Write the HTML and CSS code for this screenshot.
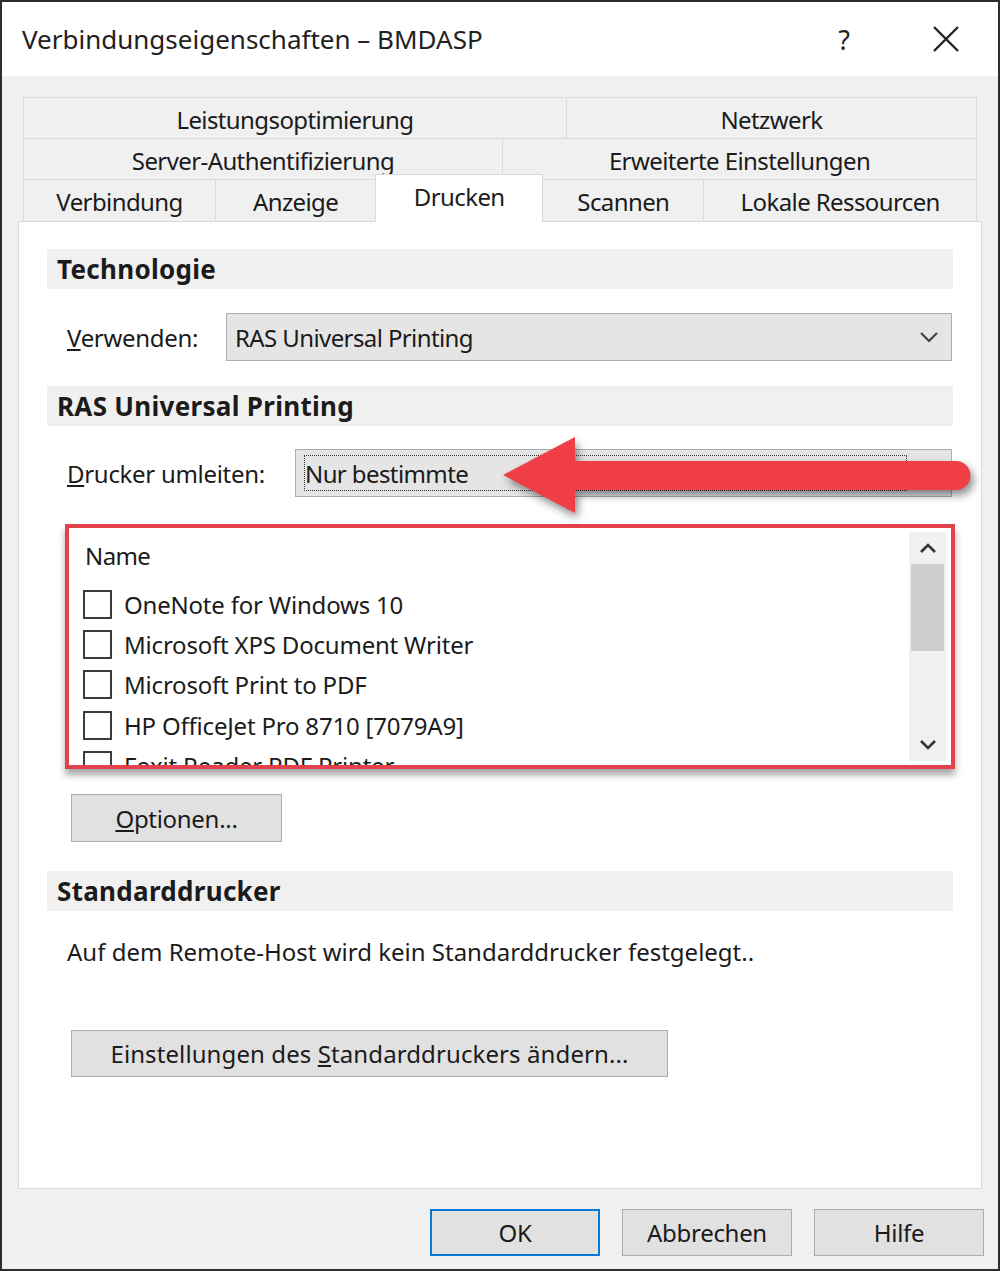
FILE: index.html
```html
<!DOCTYPE html>
<html lang="de">
  <head>
    <meta charset="UTF-8" />
    <meta name="viewport" content="width=device-width, initial-scale=1.0" />
    <title>Verbindungseigenschaften – BMDASP</title>
    <link rel="stylesheet" href="styles.css">
  </head>
  <body>
    <div class="dialog">
      <div class="titlebar">
        <span class="title">Verbindungseigenschaften – BMDASP</span>
        <span class="tb-btn help">?</span>
        <span class="tb-btn close">
          <svg width="28" height="28" viewBox="0 0 28 28">
            <path d="M2 2 L26 26 M26 2 L2 26" stroke="#222" stroke-width="2.4" fill="none" />
          </svg>
        </span>
      </div>

      <div class="content">
        <div class="tabs">
          <div class="tab-row">
            <div class="tab w543">Leistungsoptimierung</div>
            <div class="tab w410">Netzwerk</div>
          </div>
          <div class="tab-row">
            <div class="tab w479">Server-Authentifizierung</div>
            <div class="tab w474">Erweiterte Einstellungen</div>
          </div>
          <div class="tab-row">
            <div class="tab w192">Verbindung</div>
            <div class="tab w160">Anzeige</div>
            <div class="tab w167 active">Drucken</div>
            <div class="tab w161">Scannen</div>
            <div class="tab w273">Lokale Ressourcen</div>
          </div>
        </div>

        <div class="panel">
          <div class="section">Technologie</div>
          <div class="field-row">
            <label class="field-label short"><u>V</u>erwenden:</label>
            <div class="combo">
              <span>RAS Universal Printing</span>
              <svg class="chevron" width="20" height="12" viewBox="0 0 20 12">
                <path d="M2 2 L10 10 L18 2" stroke="#444" stroke-width="2.2" fill="none" />
              </svg>
            </div>
          </div>

          <div class="section gap-25">RAS Universal Printing</div>
          <div class="field-row gap-23">
            <label class="field-label long"><u>D</u>rucker umleiten:</label>
            <div class="combo">
              <span class="focus-rect">Nur bestimmte</span>
            </div>
          </div>

          <div class="printer-list">
            <div class="list-body">
              <div class="list-head">Name</div>
              <div class="list-item"><span class="check"></span>OneNote for Windows 10</div>
              <div class="list-item"><span class="check"></span>Microsoft XPS Document Writer</div>
              <div class="list-item"><span class="check"></span>Microsoft Print to PDF</div>
              <div class="list-item"><span class="check"></span>HP OfficeJet Pro 8710 [7079A9]</div>
              <div class="list-item"><span class="check"></span>Foxit Reader PDF Printer</div>
            </div>
            <div class="scrollbar">
              <svg width="18" height="12" viewBox="0 0 18 12">
                <path d="M2 10 L9 3 L16 10" stroke="#333" stroke-width="2.6" fill="none" />
              </svg>
              <div class="thumb"></div>
              <div class="track"></div>
              <svg width="18" height="12" viewBox="0 0 18 12">
                <path d="M2 2 L9 9 L16 2" stroke="#333" stroke-width="2.6" fill="none" />
              </svg>
            </div>
          </div>

          <button class="btn options"><u>O</u>ptionen...</button>

          <div class="section gap-29">Standarddrucker</div>
          <p class="info">Auf dem Remote-Host wird kein Standarddrucker festgelegt..</p>

          <button class="btn change">Einstellungen des <u>S</u>tandarddruckers ändern...</button>
        </div>

        <div class="footer">
          <button class="btn foot default">OK</button>
          <button class="btn foot">Abbrechen</button>
          <button class="btn foot">Hilfe</button>
        </div>
      </div>

      <!-- annotation arrow drawn over the dialog -->
      <svg class="arrow" width="490" height="95" viewBox="0 0 490 95">
        <path d="M8 45 L80 7 L80 31 L461 31 A14.5 14.5 0 0 1 461 60 L80 60 L80 83 Z" fill="#ef3e45" />
      </svg>
    </div>
  </body>
</html>
```

FILE: styles.css
```css
* {
  box-sizing: border-box;
}

body {
  margin: 0;
  font-family: "Noto Sans", "Open Sans", sans-serif;
  font-size: 24px;
  color: #1b1b1b;
  background-color: #ffffff;
}

.dialog {
  position: relative;
  width: 1000px;
  height: 1271px;
  border: 2px solid #2d2d2d;
  display: flex;
  flex-direction: column;
  background-color: #f0f0f0;
}

.titlebar {
  height: 74px;
  background-color: #ffffff;
  display: flex;
  align-items: center;
  padding-left: 20px;
}

.title {
  flex: 1;
  font-size: 26px;
  letter-spacing: 0;
  color: #222;
}

.tb-btn {
  width: 100px;
  display: flex;
  justify-content: center;
  align-items: center;
  font-size: 27px;
  color: #222;
}

.close {
  width: 104px;
}

.content {
  flex: 1;
  display: flex;
  flex-direction: column;
  padding: 21px 0 12px 16px;
}

.tabs {
  margin: 0 21px 0 6px;
}

.tab-row {
  display: flex;
  height: 42px;
}

.tab-row + .tab-row {
  margin-top: -1px;
}

.tab {
  flex-basis: 0;
  display: flex;
  justify-content: center;
  align-items: center;
  padding-top: 2px;
  border: 1px solid #d9d9d9;
  border-bottom: none;
  margin-left: -1px;
  background-color: #f0f0f0;
  letter-spacing: -0.6px;
  white-space: nowrap;
}

.w543 { flex-grow: 543; }
.w410 { flex-grow: 410; }
.w479 { flex-grow: 479; }
.w474 { flex-grow: 474; }
.w192 { flex-grow: 192; }
.w160 { flex-grow: 160; }
.w167 { flex-grow: 167; }
.w161 { flex-grow: 161; }
.w273 { flex-grow: 273; }

.tab.active {
  position: relative;
  z-index: 1;
  background-color: #ffffff;
  margin-top: -5px;
  height: 48px;
  padding-top: 0;
  padding-bottom: 4px;
}

.panel {
  margin-right: 16px;
  height: 968px;
  background-color: #ffffff;
  border: 1px solid #d9d9d9;
  padding: 27px 28px 0 28px;
  display: flex;
  flex-direction: column;
  align-items: flex-start;
}

.section {
  align-self: stretch;
  height: 40px;
  display: flex;
  align-items: center;
  padding-left: 10px;
  background-color: #f0f0f0;
  font-weight: bold;
  font-size: 26px;
  letter-spacing: 0.3px;
}

.gap-25 { margin-top: 25px; }
.gap-23 { margin-top: 23px !important; }
.gap-29 { margin-top: 29px; }

.field-row {
  align-self: stretch;
  display: flex;
  align-items: center;
  margin-top: 24px;
  height: 48px;
  margin-right: 1px;
}

.field-label {
  padding-left: 20px;
  letter-spacing: -0.3px;
}

.field-label.short {
  width: 179px;
}

.field-label.long {
  width: 248px;
}

.combo {
  flex: 1;
  height: 48px;
  background-color: #e5e5e5;
  border: 1px solid #adadad;
  display: flex;
  align-items: center;
  padding: 0 8px;
  letter-spacing: -0.6px;
}

.combo span {
  flex: 1;
}

.chevron {
  margin-right: 4px;
}

.focus-rect {
  height: 36px;
  display: flex;
  align-items: center;
  border: 1px dotted #333;
  margin-right: 36px;
}

.printer-list {
  align-self: stretch;
  margin: 27px -2px 0 18px;
  height: 245px;
  border: 4px solid #e3424a;
  box-shadow: 0 6px 7px rgba(0, 0, 0, 0.35);
  display: flex;
  overflow: hidden;
}

.list-body {
  flex: 1;
  padding-left: 14px;
  overflow: hidden;
}

.list-head {
  height: 56px;
  display: flex;
  align-items: center;
  padding: 0 0 2px 2px;
  letter-spacing: -0.6px;
}

.list-item {
  height: 40.4px;
  display: flex;
  align-items: center;
  letter-spacing: -0.2px;
}

.check {
  width: 29px;
  height: 29px;
  border: 2px solid #3c3c3c;
  margin-right: 12px;
  background-color: #ffffff;
}

.scrollbar {
  width: 37px;
  margin: 4px 5px 4px 0;
  background-color: #f0f0f0;
  display: flex;
  flex-direction: column;
  align-items: center;
}

.scrollbar svg {
  margin: 10px 0;
}

.thumb {
  width: 33px;
  height: 87px;
  background-color: #cdcdcd;
}

.track {
  flex: 1;
}

.btn {
  font-family: inherit;
  font-size: 24px;
  color: #1b1b1b;
  background-color: #e1e1e1;
  border: 1px solid #adadad;
  letter-spacing: -0.3px;
  padding: 0;
}

.options {
  margin: 25px 0 0 24px;
  width: 211px;
  height: 48px;
}

.info {
  margin: 28px 0 0 20px;
  line-height: 26px;
  letter-spacing: 0;
}

.change {
  margin: 65px 0 0 24px;
  width: 597px;
  height: 47px;
  letter-spacing: 0.1px;
}

.footer {
  display: flex;
  justify-content: flex-end;
  gap: 22px;
  margin-top: 20px;
  padding-right: 14px;
}

.foot {
  width: 170px;
  height: 47px;
}

.foot.default {
  border: 2px solid #0a78d4;
}

.arrow {
  position: absolute;
  left: 493px;
  top: 428px;
  filter: drop-shadow(3px 5px 4px rgba(0, 0, 0, 0.45));
}
```
